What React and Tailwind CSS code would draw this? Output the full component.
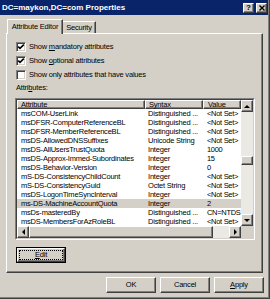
import React from "react";

const rows = [
  ["msCOM-UserLink", "Distinguished ...", "<Not Set>"],
  ["msDFSR-ComputerReferenceBL", "Distinguished ...", "<Not Set>"],
  ["msDFSR-MemberReferenceBL", "Distinguished ...", "<Not Set>"],
  ["msDS-AllowedDNSSuffixes", "Unicode String", "<Not Set>"],
  ["msDS-AllUsersTrustQuota", "Integer", "1000"],
  ["msDS-Approx-Immed-Subordinates", "Integer", "15"],
  ["msDS-Behavior-Version", "Integer", "0"],
  ["mS-DS-ConsistencyChildCount", "Integer", "<Not Set>"],
  ["mS-DS-ConsistencyGuid", "Octet String", "<Not Set>"],
  ["msDS-LogonTimeSyncInterval", "Integer", "<Not Set>"],
  ["ms-DS-MachineAccountQuota", "Integer", "2"],
  ["msDs-masteredBy", "Distinguished ...", "CN=NTDS"],
  ["msDS-MembersForAzRoleBL", "Distinguished ...", "<Not Set>"],
];

const raised =
  "bg-[#d4d0c8] border border-t-white border-l-white border-r-[#404040] border-b-[#404040] shadow-[inset_-1px_-1px_0_#808080]";

function Checkbox({ checked }) {
  return (
    <div className="w-[10px] h-[10px] bg-white border border-t-[#808080] border-l-[#808080] border-r-white border-b-white shadow-[inset_1px_1px_0_#404040,inset_-1px_-1px_0_#d4d0c8] flex items-center justify-center">
      {checked && (
        <svg width="8" height="8" viewBox="0 0 8 8">
          <path d="M1.2 3.6 L3 5.4 L6.8 1.6" stroke="#000" strokeWidth="1.6" fill="none" />
        </svg>
      )}
    </div>
  );
}

function CheckRow({ checked, children }) {
  return (
    <div className="h-[14px] flex items-center gap-[3px] pl-[1px]">
      <Checkbox checked={checked} />
      <span className="leading-[10px]">{children}</span>
    </div>
  );
}

function Arrow({ dir }) {
  const pts = {
    up: "1,4 4,1 7,4",
    down: "1,1 4,4 7,1",
    left: "4,1 1,4 4,7",
    right: "1,1 4,4 1,7",
  }[dir];
  const vert = dir === "up" || dir === "down";
  return (
    <svg width={vert ? 8 : 5} height={vert ? 5 : 8} viewBox={vert ? "0 0 8 5" : "0 0 5 8"}>
      <polygon points={pts} fill="#000" />
    </svg>
  );
}

function ScrollBtn({ dir, className = "" }) {
  return (
    <div className={`${raised} flex items-center justify-center ${className}`}>
      <Arrow dir={dir} />
    </div>
  );
}

function Button({ children, className = "" }) {
  return (
    <div className={`${raised} w-[50px] h-[16px] flex items-center justify-center leading-[10px] ${className}`}>
      {children}
    </div>
  );
}

export default function App() {
  return (
    <div className="w-[270px] h-[299px] bg-[#d4d0c8] text-black text-[7.5px] tracking-[-0.2px] font-['Liberation_Sans',Arial,sans-serif] shadow-[inset_-1px_-1px_0_#404040,inset_-2px_-2px_0_#808080] overflow-hidden select-none">
      {/* Title bar */}
      <div className="h-[15px] mr-[2px] bg-[#0a246a] flex items-center justify-between pl-[2px] pr-[1px]">
        <span className="text-white font-bold text-[8px] tracking-normal">DC=maykon,DC=com Properties</span>
        <div className="flex gap-[2px]">
          <div className={`${raised} w-[11px] h-[10px] flex items-center justify-center`}>
            <span className="font-bold text-[8px] leading-[8px] tracking-normal">?</span>
          </div>
          <div className={`${raised} w-[11px] h-[10px] flex items-center justify-center`}>
            <svg width="6" height="6" viewBox="0 0 6 6">
              <path d="M0.5 0.5 L5.5 5.5 M5.5 0.5 L0.5 5.5" stroke="#000" strokeWidth="1.4" />
            </svg>
          </div>
        </div>
      </div>

      <div className="pt-[4px] pl-[6px]">
        {/* Tabs */}
        <div className="flex items-end h-[14px] pl-[1px]">
          <div className="relative z-10 -mb-px w-[56px] h-[15px] bg-[#d4d0c8] border-l border-t border-white border-r border-r-[#404040] rounded-tl-[1px] shadow-[inset_-1px_0_0_#808080] flex items-center justify-center">
            <span className="leading-[10px]">Attribute Editor</span>
          </div>
          <div className="w-[33px] h-[12px] bg-[#d4d0c8] border-t border-white border-r border-r-[#404040] shadow-[inset_-1px_0_0_#808080] flex items-center justify-center">
            <span className="leading-[10px]">Security</span>
          </div>
        </div>

        {/* Panel */}
        <div className="w-[257px] h-[240px] border border-t-white border-l-white border-r-[#404040] border-b-[#404040] shadow-[inset_-1px_-1px_0_#808080] pl-[8px] pt-[6px]">
          <CheckRow checked>
            Show <u>m</u>andatory attributes
          </CheckRow>
          <CheckRow checked>
            Show <u>o</u>ptional attributes
          </CheckRow>
          <CheckRow>Show only attributes that have values</CheckRow>

          <div className="mt-[1px] h-[10px] leading-[10px] pl-[1px]">
            Attri<u>b</u>utes:
          </div>

          {/* List view */}
          <div className="mt-[5px] w-[240px] h-[142px] border border-t-[#808080] border-l-[#808080] border-r-white border-b-white">
            <div className="w-full h-full border border-t-[#404040] border-l-[#404040] border-r-[#d4d0c8] border-b-[#d4d0c8] bg-white flex flex-col">
              <div className="flex h-[126px]">
                <div className="w-[224px] flex flex-col">
                  <div className="flex h-[9px]">
                    <div className={`${raised} w-[128px] pl-[3px] leading-[7px]`}>Attribute</div>
                    <div className={`${raised} w-[58px] pl-[3px] leading-[7px]`}>Syntax</div>
                    <div className={`${raised} w-[38px] pl-[4px] leading-[7px]`}>Value</div>
                  </div>
                  {rows.map((r, i) => (
                    <div
                      key={r[0]}
                      className={`flex h-[9px] leading-[9px] whitespace-nowrap ${i === 10 ? "bg-[#d4d0c8]" : ""}`}
                    >
                      <div className="w-[128px] pl-[4px] overflow-hidden">{r[0]}</div>
                      <div className="w-[58px] pl-[3px] overflow-hidden">{r[1]}</div>
                      <div className="w-[38px] pl-[4px] tracking-[-0.3px]">{r[2]}</div>
                    </div>
                  ))}
                </div>
                {/* Vertical scrollbar */}
                <div className="w-[12px] h-full bg-[#ebe9e4] flex flex-col">
                  <ScrollBtn dir="up" className="h-[12px] w-full" />
                  <div className="h-[44px]" />
                  <div className={`${raised} h-[9px] w-full`} />
                  <div className="flex-1" />
                  <ScrollBtn dir="down" className="h-[12px] w-full" />
                </div>
              </div>
              {/* Horizontal scrollbar */}
              <div className="flex h-[12px]">
                <div className="w-[224px] flex bg-[#ebe9e4]">
                  <ScrollBtn dir="left" className="w-[12px] h-full" />
                  <div className={`${raised} w-[184px] h-full`} />
                  <div className="flex-1" />
                  <ScrollBtn dir="right" className="w-[12px] h-full" />
                </div>
                <div className="w-[12px] h-full bg-[#d4d0c8]" />
              </div>
            </div>
          </div>

          {/* Edit button */}
          <div className="mt-[7px] ml-[1px] w-[50px] h-[16px] border border-black">
            <div className="w-full h-full bg-[#d4d0c8] border border-t-white border-l-white border-r-[#404040] border-b-[#404040] shadow-[inset_-1px_-1px_0_#808080] p-[1px]">
              <div className="w-full h-full border border-dotted border-black flex items-center justify-center">
                <span className="leading-[8px]">
                  <u>E</u>dit
                </span>
              </div>
            </div>
          </div>
        </div>

        {/* Bottom buttons */}
        <div className="flex justify-end gap-[4px] mt-[4px] w-[258px]">
          <Button>OK</Button>
          <Button>Cancel</Button>
          <Button>
            <span>
              <u>A</u>pply
            </span>
          </Button>
        </div>
      </div>
    </div>
  );
}
